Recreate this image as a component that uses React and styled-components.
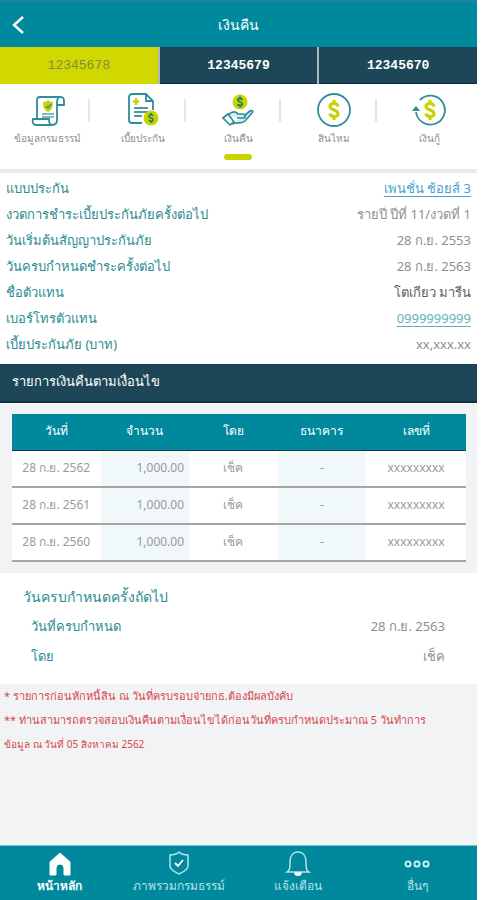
import React, { useState } from "react";
import styled, { createGlobalStyle } from "styled-components";

const GlobalStyle = createGlobalStyle`
  * {
    box-sizing: border-box;
  }
  body {
    margin: 0;
    background: #fff;
    font-family: "Noto Sans", "Open Sans", sans-serif;
    font-size: 13px;
    color: #8f8f8f;
  }
  button {
    font-family: inherit;
    border: none;
    padding: 0;
    cursor: pointer;
  }
`;

const Page = styled.div`
  display: flex;
  flex-direction: column;
  min-height: 100vh;
  margin-right: 5px;
  background: #f1f3f5;
`;

const Header = styled.header`
  display: grid;
  grid-template-columns: 36px 1fr 36px;
  align-items: center;
  height: 47px;
  background: #00899d;
  border-top: 2px solid #24829a;
  color: #fff;
`;

const BackButton = styled.button`
  display: flex;
  justify-content: center;
  background: none;
  color: #fff;
`;

const HeaderTitle = styled.h1`
  margin: 0;
  font-size: 14px;
  font-weight: 500;
  text-align: center;
`;

const PolicyTabs = styled.div`
  display: grid;
  grid-template-columns: repeat(3, 1fr);
  column-gap: 2px;
  height: 37px;
  background: #a9b7bf;
`;

const PolicyTab = styled.button`
  background: ${(props) => (props.$active ? "#d0d800" : "#1d4758")};
  color: ${(props) => (props.$active ? "#858a4a" : "#fff")};
  border-bottom: 1px solid ${(props) => (props.$active ? "#d0d800" : "#102a4c")};
  font-family: "Liberation Mono", monospace;
  font-size: 13px;
  font-weight: ${(props) => (props.$active ? 400 : 700)};
`;

const Menu = styled.nav`
  display: grid;
  grid-template-columns: repeat(5, 1fr);
  height: 89px;
  background: #fff;
  border-bottom: 4px solid #e9e9e9;
`;

const MenuItem = styled.button`
  position: relative;
  display: flex;
  flex-direction: column;
  align-items: center;
  padding-top: 8px;
  background: none;
  color: #8f8f8f;
  font-size: 10px;
  line-height: 20px;
  white-space: nowrap;

  &:not(:last-child)::after {
    content: "";
    position: absolute;
    top: 15px;
    right: 5px;
    width: 2px;
    height: 23px;
    background: #e6e6e6;
  }
`;

const MenuMark = styled.span`
  width: 28px;
  height: 6px;
  margin-top: 6px;
  border-radius: 3px;
  background: #c8d400;
`;

const Details = styled.dl`
  margin: 0;
  padding: 2px 6px 7px;
  background: #fff;
`;

const DetailRow = styled.div`
  display: flex;
  justify-content: space-between;
  line-height: 26px;

  dt {
    color: #2b8c91;
  }
  dd {
    margin: 0;
    color: ${(props) => (props.$dark ? "#5c5c5c" : "#8f8f8f")};
  }
`;

const DetailLink = styled.a`
  color: ${(props) => props.$color};
  text-underline-offset: 3px;
`;

const SectionTitle = styled.h2`
  margin: 0;
  padding-left: 12px;
  height: 39px;
  line-height: 34px;
  background: #1d4758;
  border-bottom: 2px solid #0b3145;
  color: #fff;
  font-size: 13px;
  font-weight: 500;
`;

const TableArea = styled.section`
  padding: 10px 11px 11px 12px;
  border-top: 1px solid #fff;
`;

const RefundTable = styled.table`
  width: 100%;
  border-collapse: separate;
  border-spacing: 0;
  table-layout: fixed;
  background: #fff;
  font-size: 12px;

  th {
    height: 37px;
    padding: 0 0 4px;
    background: #00899d;
    border-bottom: 1px solid #123a4a;
    color: #fff;
    font-weight: 500;
  }
  th:last-child {
    width: 22%;
  }
  td {
    height: 37px;
    padding: 0 5px 2px;
    border-bottom: 2px solid #a5a5a5;
    text-align: center;
    color: #9a9a9a;
    white-space: nowrap;
  }
  td:nth-child(even) {
    background: #f0f8fa;
  }
  td:nth-child(2) {
    text-align: right;
  }
`;

const NextDue = styled.section`
  padding: 10px 24px 13px 23px;
  background: #fff;
`;

const NextDueTitle = styled.h3`
  margin: 0;
  color: #2b8c91;
  font-size: 14px;
  font-weight: 400;
  line-height: 28px;
`;

const NextDueList = styled.dl`
  margin: 0;
  padding: 0 8px;
`;

const NextDueRow = styled(DetailRow)`
  line-height: 30px;
`;

const Notes = styled.footer`
  flex: 1;
  padding: 0 4px;
  color: #d8474f;
`;

const Note = styled.p`
  margin: 0;
  line-height: 24px;
  font-size: ${(props) => (props.$small ? 10 : 11)}px;
`;

const BottomNav = styled.nav`
  display: grid;
  grid-template-columns: repeat(4, 1fr);
  height: 55px;
  background: #00899d;
  border-top: 1px solid #7cc0cf;
`;

const BottomItem = styled.button`
  display: flex;
  flex-direction: column;
  align-items: center;
  padding-top: 5px;
  background: none;
  color: ${(props) => (props.$active ? "#fff" : "#b5e2e8")};
  font-size: 12px;
  font-weight: ${(props) => (props.$active ? 700 : 400)};
  line-height: 20px;
  white-space: nowrap;
`;

const teal = "#2f8c9b";
const lime = "#c8d400";

const Dollar = ({ x, y, scale = 1, color = lime, width = 3 }) => (
  <g
    transform={`translate(${x} ${y}) scale(${scale})`}
    fill="none"
    stroke={color}
    strokeWidth={width}
  >
    <path d="M4 -3.500C3.500 -7.500 -4 -7.500 -4 -3.500C-4 0.500 4 -0.500 4 3.500C4 7.500 -3.500 7.500 -4 3.500M0 -10V-6M0 6V10" />
  </g>
);

const PolicyIcon = () => (
  <svg width="36" height="36" viewBox="0 0 36 36" fill="none" stroke={teal} strokeWidth="1.8">
    <path d="M7 27V8a3 3 0 0 1 3-3h20M30 5c-3 0-3 3-3 6v17c0 3-2 5-5 5" />
    <path d="M27 13h7V9c0-4-2-4-4-4" />
    <path d="M22 33H6c-3 0-4-3-3-6h16c0 4 1 6 3 6z" fill="#fff" />
    <path d="M12 22h12M12 25h12" stroke="#5ba3af" strokeWidth="1.3" />
    <path d="M18 8c2 2 3 2 5 2 0 5-1 8-5 10-4-2-5-5-5-10 2 0 3 0 5-2z" fill={lime} stroke="none" />
    <path d="M16 14l2 2 3-4" strokeWidth="1.4" />
  </svg>
);

const PremiumIcon = () => (
  <svg width="36" height="36" viewBox="0 0 36 36" fill="none" stroke={teal} strokeWidth="1.8">
    <path d="M17 31H7a3 3 0 0 1-3-3V5a3 3 0 0 1 3-3h14l7 7v9M21 2v7h7" />
    <path d="M9 16h14M9 20h14M9 24h8" stroke="#4b99a5" />
    <path d="M11 6v7M8 9.500h6" stroke={lime} strokeWidth="2.400" />
    <circle cx="26" cy="26" r="7.500" fill={lime} stroke="none" />
    <Dollar x={26} y={26} scale={0.5} color="#237f63" width={3.4} />
  </svg>
);

const RefundIcon = () => (
  <svg width="36" height="36" viewBox="0 0 36 36" fill="none" stroke={teal} strokeWidth="1.7">
    <circle cx="20" cy="10" r="7.500" fill={lime} stroke="none" />
    <Dollar x={20} y={10} scale={0.54} color="#237f63" width={3.4} />
    <path d="M8 23c4-4 8-4 10-1h5c3 0 3 4 0 4h-6M24 24l6-5c2-1 4 0 2 2l-7 8c-3 3-8 1-13 3" fill="#d9edf0" />
    <path d="M3 26l5-4 6 8-4 3z" fill="#fff" />
  </svg>
);

const ClaimIcon = () => (
  <svg width="36" height="36" viewBox="0 0 36 36" fill="none">
    <circle cx="18" cy="18" r="16" stroke={teal} strokeWidth="1.800" />
    <Dollar x={18} y={18} width={3.2} />
  </svg>
);

const LoanIcon = () => (
  <svg width="36" height="36" viewBox="0 0 36 36" fill="none">
    <path d="M9 8A14.500 14.500 0 1 1 5 20" stroke={teal} strokeWidth="1.800" />
    <path d="M1 19l4-5 4 5z" fill={teal} />
    <Dollar x={19} y={18} width={3.2} />
  </svg>
);

const HomeIcon = () => (
  <svg width="26" height="25" viewBox="0 0 26 25" fill="#fff">
    <path d="M13 2l10 9v13h-6v-7a4 4 0 0 0-8 0v7H3V11z" stroke="#fff" strokeLinejoin="round" />
  </svg>
);

const ShieldIcon = () => (
  <svg width="26" height="25" viewBox="0 0 26 25" fill="none" stroke="currentColor" strokeWidth="1.500">
    <path d="M13 1c3 3 6 3 9 3v11c0 4-5 6-9 8-4-2-9-4-9-8V4c3 0 6 0 9-3z" />
    <path d="M9 12l3 3 5-6" stroke="#fff" strokeWidth="1.800" />
  </svg>
);

const BellIcon = () => (
  <svg width="26" height="25" viewBox="0 0 26 25" fill="none" stroke="currentColor" strokeWidth="1.500">
    <path d="M2 21c3-2 3-4 3-10 0-6 3-10 8-10s8 4 8 10c0 6 0 8 3 10z" />
    <path d="M10 22h6c0 3-6 3-6 0z" fill="#fff" stroke="#fff" />
  </svg>
);

const MoreIcon = () => (
  <svg width="26" height="25" viewBox="0 0 26 25" fill="none" stroke="#d5f3f5" strokeWidth="1.800">
    <circle cx="4" cy="13" r="2.600" />
    <circle cx="13" cy="13" r="2.600" />
    <circle cx="22" cy="13" r="2.600" />
  </svg>
);

const policies = ["12345678", "12345679", "12345670"];

const menuItems = [
  { label: "ข้อมูลกรมธรรม์", Icon: PolicyIcon },
  { label: "เบี้ยประกัน", Icon: PremiumIcon },
  { label: "เงินคืน", Icon: RefundIcon },
  { label: "สินไหม", Icon: ClaimIcon },
  { label: "เงินกู้", Icon: LoanIcon },
];

const refunds = [
  { date: "28 ก.ย. 2562", amount: "1,000.00", by: "เช็ค", bank: "-", no: "xxxxxxxxx" },
  { date: "28 ก.ย. 2561", amount: "1,000.00", by: "เช็ค", bank: "-", no: "xxxxxxxxx" },
  { date: "28 ก.ย. 2560", amount: "1,000.00", by: "เช็ค", bank: "-", no: "xxxxxxxxx" },
];

const bottomItems = [
  { label: "หน้าหลัก", Icon: HomeIcon },
  { label: "ภาพรวมกรมธรรม์", Icon: ShieldIcon },
  { label: "แจ้งเตือน", Icon: BellIcon },
  { label: "อื่นๆ", Icon: MoreIcon },
];

const App = () => {
  const [policy, setPolicy] = useState(policies[0]);
  const [menu, setMenu] = useState("เงินคืน");

  return (
    <Page>
      <GlobalStyle />
      <Header>
        <BackButton type="button" aria-label="กลับ">
          <svg width="14" height="20" viewBox="0 0 14 20" fill="none" stroke="#fff" strokeWidth="2.400">
            <path d="M12 2L3 10l9 8" />
          </svg>
        </BackButton>
        <HeaderTitle>เงินคืน</HeaderTitle>
      </Header>

      <PolicyTabs>
        {policies.map((no) => (
          <PolicyTab key={no} type="button" $active={no === policy} onClick={() => setPolicy(no)}>
            {no}
          </PolicyTab>
        ))}
      </PolicyTabs>

      <Menu>
        {menuItems.map(({ label, Icon }) => (
          <MenuItem key={label} type="button" onClick={() => setMenu(label)}>
            <Icon />
            {label}
            {label === menu && <MenuMark />}
          </MenuItem>
        ))}
      </Menu>

      <Details>
        <DetailRow>
          <dt>แบบประกัน</dt>
          <dd>
            <DetailLink href="#plan" $color="#4a9fd0">เพนชั่น ช้อยส์ 3</DetailLink>
          </dd>
        </DetailRow>
        <DetailRow>
          <dt>งวดการชำระเบี้ยประกันภัยครั้งต่อไป</dt>
          <dd>รายปี ปีที่ 11/งวดที่ 1</dd>
        </DetailRow>
        <DetailRow>
          <dt>วันเริ่มต้นสัญญาประกันภัย</dt>
          <dd>28 ก.ย. 2553</dd>
        </DetailRow>
        <DetailRow>
          <dt>วันครบกำหนดชำระครั้งต่อไป</dt>
          <dd>28 ก.ย. 2563</dd>
        </DetailRow>
        <DetailRow $dark>
          <dt>ชื่อตัวแทน</dt>
          <dd>โตเกียว มารีน</dd>
        </DetailRow>
        <DetailRow>
          <dt>เบอร์โทรตัวแทน</dt>
          <dd>
            <DetailLink href="tel:0999999999" $color="#5fb3b8">0999999999</DetailLink>
          </dd>
        </DetailRow>
        <DetailRow>
          <dt>เบี้ยประกันภัย (บาท)</dt>
          <dd>xx,xxx.xx</dd>
        </DetailRow>
      </Details>

      <SectionTitle>รายการเงินคืนตามเงื่อนไข</SectionTitle>
      <TableArea>
        <RefundTable>
          <thead>
            <tr>
              <th>วันที่</th>
              <th>จำนวน</th>
              <th>โดย</th>
              <th>ธนาคาร</th>
              <th>เลขที่</th>
            </tr>
          </thead>
          <tbody>
            {refunds.map((row) => (
              <tr key={row.date}>
                <td>{row.date}</td>
                <td>{row.amount}</td>
                <td>{row.by}</td>
                <td>{row.bank}</td>
                <td>{row.no}</td>
              </tr>
            ))}
          </tbody>
        </RefundTable>
      </TableArea>

      <NextDue>
        <NextDueTitle>วันครบกำหนดครั้งถัดไป</NextDueTitle>
        <NextDueList>
          <NextDueRow>
            <dt>วันที่ครบกำหนด</dt>
            <dd>28 ก.ย. 2563</dd>
          </NextDueRow>
          <NextDueRow>
            <dt>โดย</dt>
            <dd>เช็ค</dd>
          </NextDueRow>
        </NextDueList>
      </NextDue>

      <Notes>
        <Note>* รายการก่อนหักหนี้สิน ณ วันที่ครบรอบจ่ายกธ.ต้องมีผลบังคับ</Note>
        <Note>** ท่านสามารถตรวจสอบเงินคืนตามเงื่อนไขได้ก่อนวันที่ครบกำหนดประมาณ 5 วันทำการ</Note>
        <Note $small>ข้อมูล ณ วันที่ 05 สิงหาคม 2562</Note>
      </Notes>

      <BottomNav>
        {bottomItems.map(({ label, Icon }, i) => (
          <BottomItem key={label} type="button" $active={i === 0}>
            <Icon />
            {label}
          </BottomItem>
        ))}
      </BottomNav>
    </Page>
  );
};

export default App;
